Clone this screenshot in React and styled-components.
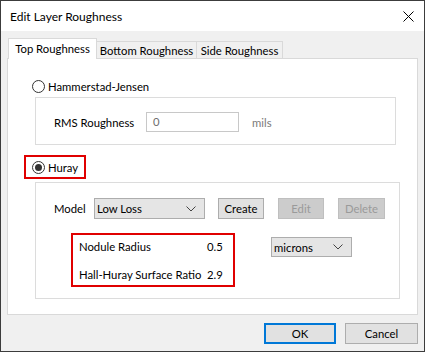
import styled, { createGlobalStyle } from "styled-components";

const GlobalStyle = createGlobalStyle`
  html, body {
    margin: 0;
    padding: 0;
    background: #ffffff;
  }
  * {
    box-sizing: border-box;
  }
  body {
    font-family: Lato, "Liberation Sans", sans-serif;
    font-size: 11.3px;
    color: #000000;
  }
`;

const Window = styled.div`
  width: 425px;
  height: 352px;
  border: 1px solid #3c3c3c;
  display: flex;
  flex-direction: column;
  background: #f0f0f0;
`;

const TitleBar = styled.div`
  height: 30px;
  flex-shrink: 0;
  background: #ffffff;
  display: flex;
  align-items: center;
  justify-content: space-between;
  padding: 0 10px 0 9px;
  font-size: 12px;
`;

const Body = styled.div`
  flex: 1;
  padding: 7px 6px 0 6px;
  display: flex;
  flex-direction: column;
`;

const TabRow = styled.div`
  display: flex;
  align-items: flex-end;
  padding-left: 1px;
  height: 21px;
  position: relative;
  z-index: 1;
`;

const Tab = styled.div`
  width: ${(p) => p.$w};
  height: ${(p) => (p.$active ? "21px" : "18px")};
  padding-top: ${(p) => (p.$active ? "2px" : "1px")};
  background: ${(p) => (p.$active ? "#ffffff" : "#f0f0f0")};
  border: 1px solid #d9d9d9;
  border-bottom: ${(p) => (p.$active ? "none" : "1px solid #d9d9d9")};
  margin-left: ${(p) => (p.$first ? "0" : "-1px")};
  text-align: center;
  white-space: nowrap;
  line-height: 16px;
`;

const Panel = styled.div`
  margin-top: -1px;
  height: 257px;
  background: #ffffff;
  border: 1px solid #d9d9d9;
  padding: 15px 17px 0 16px;
  display: flex;
  flex-direction: column;
`;

const RadioRow = styled.label`
  display: inline-flex;
  align-items: center;
  gap: 3px;
  height: 16px;
  white-space: nowrap;
`;

const RadioCircle = styled.span`
  width: 13px;
  height: 13px;
  border-radius: 50%;
  border: 1px solid #333333;
  display: inline-flex;
  align-items: center;
  justify-content: center;
  background: #ffffff;

  &::after {
    content: "";
    width: 7px;
    height: 7px;
    border-radius: 50%;
    background: ${(p) => (p.$checked ? "#333333" : "transparent")};
  }
`;

const Highlight = styled.div`
  border: 2px solid ${(p) => (p.$off ? "transparent" : "#e00000")};
  display: ${(p) => (p.$inline ? "inline-flex" : "block")};
  align-self: flex-start;
  flex-shrink: 0;
  padding: ${(p) => p.$pad || "0"};
  margin-top: ${(p) => p.$mt || "0"};
`;

const GroupBox = styled.div`
  margin-left: 11px;
  margin-right: ${(p) => p.$mr || "0"};
  margin-top: ${(p) => p.$mt || "0"};
  border: 1px solid #dcdcdc;
  height: ${(p) => p.$h};
  flex-shrink: 0;
  padding: ${(p) => p.$pad};
`;

const FieldRow = styled.div`
  display: flex;
  align-items: center;
  height: ${(p) => p.$h || "20px"};
`;

const Label = styled.span`
  width: ${(p) => p.$w || "auto"};
  flex-shrink: 0;
  white-space: nowrap;
  color: ${(p) => (p.$muted ? "#7a7a7a" : "#000000")};
`;

const TextInput = styled.div`
  width: 93px;
  height: 20px;
  border: 1px solid #c8c8c8;
  padding: 0 6px;
  line-height: 18px;
  color: #6d6d6d;
  margin-right: 13px;
`;

const Select = styled.div`
  width: ${(p) => p.$w};
  height: ${(p) => p.$h || "21px"};
  margin-left: ${(p) => p.$ml || "0"};
  margin-top: ${(p) => p.$mt || "0"};
  background: #e5e5e5;
  border: 1px solid #adadad;
  display: flex;
  align-items: center;
  justify-content: space-between;
  padding: 0 8px 0 2px;
  flex-shrink: 0;
`;

const Button = styled.div`
  width: ${(p) => p.$w};
  height: ${(p) => p.$h || "21px"};
  background: ${(p) => (p.$disabled ? "#cccccc" : "#e1e1e1")};
  border: ${(p) =>
    p.$primary
      ? "2px solid #0078d7"
      : p.$disabled
      ? "1px solid #bfbfbf"
      : "1px solid #adadad"};
  color: ${(p) => (p.$disabled ? "#9a9a9a" : "#000000")};
  display: flex;
  align-items: center;
  justify-content: center;
  margin-left: ${(p) => p.$ml || "0"};
  flex-shrink: 0;
`;

const ParamGrid = styled.div`
  display: grid;
  grid-template-columns: 128px 26px;
  grid-auto-rows: 16px;
  row-gap: 12px;
  align-items: center;
  white-space: nowrap;
`;

const ParamsLine = styled.div`
  display: flex;
  align-items: flex-start;
  margin-top: 14px;
  margin-left: 17px;
`;

const Footer = styled.div`
  display: flex;
  justify-content: flex-end;
  gap: 9px;
  padding-top: 8px;
`;

const Chevron = () => (
  <svg width="10" height="6" viewBox="0 0 10 6">
    <path d="M0.5 0.5 L5 5 L9.5 0.5" fill="none" stroke="#444" strokeWidth="1" />
  </svg>
);

const CloseIcon = () => (
  <svg width="11" height="11" viewBox="0 0 11 11">
    <path d="M0.5 0.5 L10.5 10.5 M10.5 0.5 L0.5 10.5" stroke="#000" strokeWidth="1" />
  </svg>
);

export default function App() {
  return (
    <>
      <GlobalStyle />
      <Window>
        <TitleBar>
          <span>Edit Layer Roughness</span>
          <CloseIcon />
        </TitleBar>
        <Body>
          <TabRow>
            <Tab $active $first $w="89px">Top Roughness</Tab>
            <Tab $w="101px">Bottom Roughness</Tab>
            <Tab $w="87px">Side Roughness</Tab>
          </TabRow>
          <Panel>
            <Highlight $inline $off $pad="2px 6px">
              <RadioRow>
                <RadioCircle />
                Hammerstad-Jensen
              </RadioRow>
            </Highlight>
            <GroupBox $h="48px" $pad="14px 0 0 18px" $mr="4px" $mt="-1px">
              <FieldRow>
                <Label $w="92px">RMS Roughness</Label>
                <TextInput>0</TextInput>
                <Label $muted>mils</Label>
              </FieldRow>
            </GroupBox>
            <Highlight $inline $pad="2px 6px" $mt="10px">
              <RadioRow>
                <RadioCircle $checked />
                Huray
              </RadioRow>
            </Highlight>
            <GroupBox $h="117px" $pad="15px 0 0 18px" $mt="3px">
              <FieldRow $h="21px">
                <Label $w="40px">Model</Label>
                <Select $w="111px">
                  <span>Low Loss</span>
                  <Chevron />
                </Select>
                <Button $w="46px" $ml="13px">Create</Button>
                <Button $w="46px" $ml="14px" $disabled>Edit</Button>
                <Button $w="47px" $ml="14px" $disabled>Delete</Button>
              </FieldRow>
              <ParamsLine>
                <Highlight $pad="3px 0 3px 6px">
                  <ParamGrid>
                    <span>Nodule Radius</span>
                    <span>0.5</span>
                    <span>Hall-Huray Surface Ratio</span>
                    <span>2.9</span>
                  </ParamGrid>
                </Highlight>
                <Select $w="81px" $h="20px" $ml="36px" $mt="4px">
                  <span>microns</span>
                  <Chevron />
                </Select>
              </ParamsLine>
            </GroupBox>
          </Panel>
          <Footer>
            <Button $w="72px" $primary>OK</Button>
            <Button $w="73px">Cancel</Button>
          </Footer>
        </Body>
      </Window>
    </>
  );
}
